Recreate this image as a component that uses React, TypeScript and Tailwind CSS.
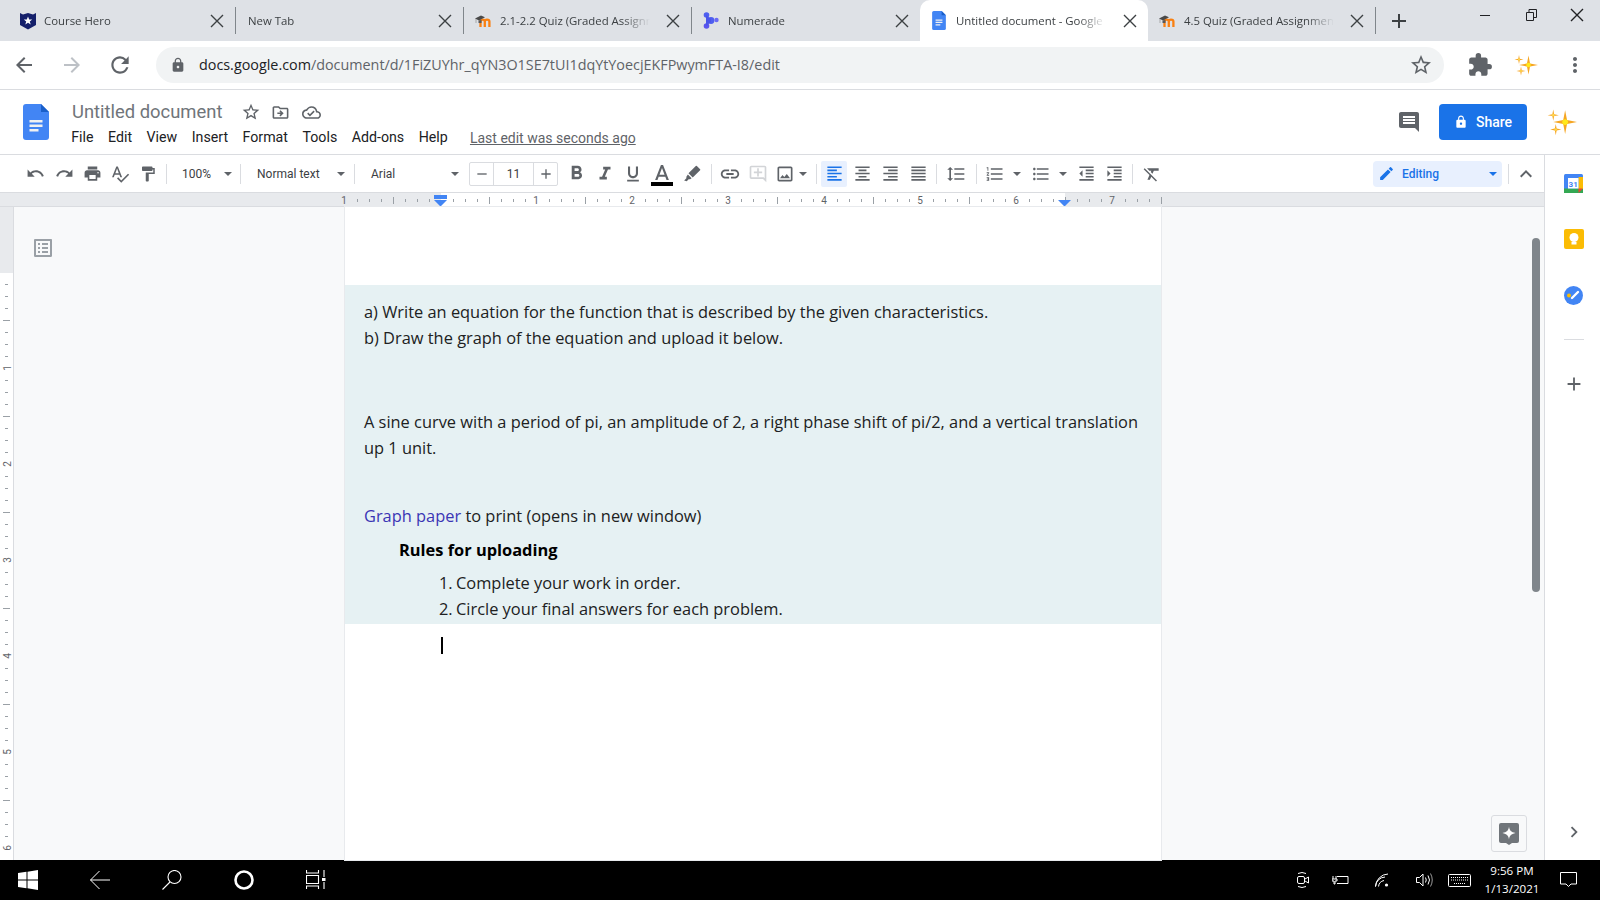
import type { ReactNode } from 'react';
import {
  MdArrowBack, MdArrowForward, MdRefresh, MdLock, MdStarBorder, MdExtension, MdMoreVert,
  MdOutlineDriveFileMove, MdOutlineCloudDone, MdUndo, MdRedo, MdPrint, MdSpellcheck, MdFormatPaint,
  MdFormatBold, MdFormatItalic, MdFormatUnderlined, MdLink, MdOutlineAddComment, MdOutlineImage,
  MdFormatAlignLeft, MdFormatAlignCenter, MdFormatAlignRight, MdFormatAlignJustify, MdFormatLineSpacing,
  MdFormatListNumbered, MdFormatListBulleted, MdFormatIndentDecrease, MdFormatIndentIncrease, MdFormatClear,
  MdEdit, MdExpandLess, MdAdd, MdRemove, MdChevronRight, MdOutlineListAlt, MdComment,
} from 'react-icons/md';

const Close = ({ className = 'text-[#3c4043]' }: { className?: string }) => (
  <svg width="14" height="14" viewBox="0 0 14 14" className={className}>
    <path d="M1 1l12 12M13 1L1 13" stroke="currentColor" strokeWidth="1.4" fill="none" />
  </svg>
);

const ShieldIcon = () => (
  <svg width="18" height="18" viewBox="0 0 18 18">
    <path d="M1 1l3 1.5L9 1l5 1.5L17 1v12l-8 4.5L1 13z" fill="#15206b" />
    <path d="M9 4.5l1.2 3h3l-2.4 2 .9 3.1L9 10.8l-2.7 1.8.9-3.1-2.4-2h3z" fill="#fff" />
  </svg>
);

const MoodleIcon = () => (
  <svg width="17" height="16" viewBox="0 0 17 16">
    <path d="M5.500 14V8.600C5.500 7 6.400 6.600 7.700 6.600S9.800 7 9.800 8.600V14M9.800 8.600c0-1.600 1-2 2.200-2s2.400.4 2.400 2V14" stroke="#f98012" strokeWidth="2.300" fill="none" />
    <path d="M0 5.500L6 2.500l4 1.800L4 7.500z" fill="#4a4a4a" />
    <path d="M1 6v4" stroke="#9a9a9a" strokeWidth="0.8" />
    <path d="M3.500 7.500v2.500h3V7z" fill="#58595b" />
  </svg>
);

const NumeradeIcon = () => (
  <svg width="16" height="17" viewBox="0 0 16 17" fill="#4f5ff0">
    <circle cx="3.500" cy="3" r="2.800" />
    <circle cx="3.500" cy="14" r="2.800" fill="#5a55ee" />
    <circle cx="8" cy="8.500" r="3.400" />
    <circle cx="13.500" cy="8" r="2.200" fill="#6a6af5" />
    <path d="M3 3l5 4v3l-5 4z" fill="#4a55e8" />
  </svg>
);

const DocsIcon = ({ w, h }: { w: number; h: number }) => (
  <svg width={w} height={h} viewBox="0 0 26 36">
    <path d="M3 0h15l8 8v25a3 3 0 0 1-3 3H3a3 3 0 0 1-3-3V3a3 3 0 0 1 3-3z" fill="#4285f4" />
    <path d="M18 0l8 8h-8z" fill="#1a5fc9" />
    <path d="M6.500 16h13v2.400h-13zM6.500 20.500h13v2.400h-13zM6.500 25h9v2.400h-9z" fill="#f1f1f1" />
  </svg>
);

const star = (cx: number, cy: number, r: number) =>
  `M${cx} ${cy - r}L${cx + r * 0.16} ${cy - r * 0.16}L${cx + r} ${cy}L${cx + r * 0.16} ${cy + r * 0.16}L${cx} ${cy + r}L${cx - r * 0.16} ${cy + r * 0.16}L${cx - r} ${cy}L${cx - r * 0.16} ${cy - r * 0.16}z`;

const Sparkles = ({ size }: { size: number }) => (
  <svg width={size} height={size} viewBox="0 0 24 24">
    <path d={star(14.5, 12, 9.500)} fill="#f6a623" />
    <circle cx="14.500" cy="12" r="2.300" fill="#ffe81a" />
    <path d={star(5, 6.500, 4.500)} fill="#f6a623" />
    <circle cx="5" cy="6.500" r="1.100" fill="#ffd54a" />
    <path d={star(7, 18, 4.500)} fill="#f6a623" />
    <circle cx="7" cy="18" r="1.100" fill="#ffd54a" />
  </svg>
);

const tabs = [
  { title: 'Course Hero', icon: <ShieldIcon /> },
  { title: 'New Tab' },
  { title: '2.1-2.2 Quiz (Graded Assignment)', icon: <MoodleIcon /> },
  { title: 'Numerade', icon: <NumeradeIcon /> },
  { title: 'Untitled document - Google Docs', icon: <DocsIcon w={16} h={19} />, active: true },
  { title: '4.5 Quiz (Graded Assignment)', icon: <MoodleIcon /> },
];

const TabStrip = () => (
  <div className="flex h-[41px] items-stretch bg-[#dee1e6] pl-[8px] font-['Open_Sans',sans-serif] text-[11.4px] text-[#3c4043]">
    {tabs.map((tab, i) => {
      const nextActive = tabs[i + 1]?.active;
      return (
        <div
          key={i}
          className={`flex w-[228px] items-center ${tab.active ? 'rounded-t-[10px] bg-white' : ''} ${
            tab.active || nextActive ? '' : 'border-r border-[#80868b] [border-image:linear-gradient(transparent_8px,#80868b_8px,#80868b_33px,transparent_33px)_1]'
          }`}
        >
          <div className={`flex w-[36px] shrink-0 justify-start ${tab.icon ? 'pl-[11px]' : ''}`}>{tab.icon}</div>
          <span
            className={`w-[150px] shrink-0 overflow-hidden whitespace-nowrap [mask-image:linear-gradient(to_right,black_122px,transparent_150px)] ${
              tab.icon ? '' : '-ml-[24px]'
            }`}
          >
            {tab.title}
          </span>
          <span className={`flex flex-1 justify-end pr-[11px] ${tab.icon ? '' : 'pl-[24px]'}`}>
            <Close />
          </span>
        </div>
      );
    })}
    <div className="ml-px flex w-[44px] items-center justify-center text-[#3c4043]">
      <MdAdd size={24} />
    </div>
    <div className="ml-auto flex items-start text-[#202124]">
      <div className="flex h-[30px] w-[46px] items-center justify-center">
        <span className="h-px w-[10px] bg-[#202124]" />
      </div>
      <div className="flex h-[30px] w-[46px] items-center justify-center">
        <svg width="11" height="12" viewBox="0 0 11 12" fill="none" stroke="#202124">
          <path d="M.5 3.500h7v8h-7zM3 3.500v-3h7.500v8H7.500" />
        </svg>
      </div>
      <div className="flex h-[30px] w-[46px] items-center justify-center">
        <Close className="text-[#202124]" />
      </div>
    </div>
  </div>
);

const AddressBar = () => (
  <div className="flex h-[49px] items-center border-b border-[#dadce0] bg-white">
    <div className="flex w-[48px] justify-center text-[#5f6368]"><MdArrowBack size={24} /></div>
    <div className="flex w-[48px] justify-center text-[#bdc1c6]"><MdArrowForward size={24} /></div>
    <div className="flex w-[48px] justify-center text-[#5f6368]"><MdRefresh size={26} /></div>
    <div className="ml-[12px] flex h-[36px] w-[1288px] items-center rounded-full bg-[#f1f3f4] pl-[14px] pr-[11px]">
      <MdLock size={16} className="text-[#5f6368]" />
      <span className="ml-[13px] whitespace-nowrap font-['Open_Sans',sans-serif] text-[14.35px] text-[#5f6368]">
        <span className="text-[#202124]">docs.google.com</span>/document/d/1FiZUYhr_qYN3O1SE7tUI1dqYtYoecjEKFPwymFTA-I8/edit
      </span>
      <MdStarBorder size={24} className="ml-auto text-[#5f6368]" />
    </div>
    <div className="ml-[22px] flex w-[28px] justify-center text-[#5f6368]"><MdExtension size={26} /></div>
    <div className="ml-[18px] flex w-[28px] justify-center"><Sparkles size={24} /></div>
    <div className="ml-[21px] flex w-[28px] justify-center text-[#5f6368]"><MdMoreVert size={24} /></div>
  </div>
);

const menus = ['File', 'Edit', 'View', 'Insert', 'Format', 'Tools', 'Add-ons', 'Help'];

const DocHeader = () => (
  <div className="flex h-[64px] items-start bg-white">
    <div className="ml-[23px] mt-[14px]"><DocsIcon w={26} h={36} /></div>
    <div className="ml-[23px] mt-[9px]">
      <div className="flex h-[26px] items-center">
        <span className="text-[18.4px] text-[#70757a]">Untitled document</span>
        <MdStarBorder size={20} className="ml-[19px] text-[#5f6368]" />
        <MdOutlineDriveFileMove size={19} className="ml-[10px] text-[#5f6368]" />
        <MdOutlineCloudDone size={19} className="ml-[12px] text-[#5f6368]" />
      </div>
      <div className="-ml-[8px] flex h-[26px] items-center text-[14.2px] text-[#202124]">
        {menus.map((m) => (
          <span key={m} className="px-[7.25px]">{m}</span>
        ))}
        <span className="ml-[15px] text-[14px] text-[#5f6368] underline">Last edit was seconds ago</span>
      </div>
    </div>
    <div className="ml-auto mt-[14px] flex items-center">
      <MdComment size={24} className="text-[#5f6368]" />
      <div className="ml-[18px] flex h-[36px] w-[88px] items-center justify-center gap-[8px] rounded-[4px] bg-[#1a73e8] text-[14px] font-medium text-white">
        <MdLock size={14} />
        Share
      </div>
      <div className="ml-[20px] mr-[23px]"><Sparkles size={30} /></div>
    </div>
  </div>
);

const Btn = ({ children, className = '' }: { children: ReactNode; className?: string }) => (
  <div className={`flex h-[26px] w-[28px] shrink-0 items-center justify-center text-[#5f6368] ${className}`}>{children}</div>
);

const Caret = ({ className = '' }: { className?: string }) => (
  <svg width="8" height="4" viewBox="0 0 8 4" className={`shrink-0 text-[#5f6368] ${className}`}>
    <path d="M0 0h8L4 4z" fill="currentColor" />
  </svg>
);

const Sep = ({ className = '' }: { className?: string }) => <div className={`h-[20px] w-px shrink-0 bg-[#dadce0] ${className}`} />;

const Toolbar = () => (
  <div className="flex h-[39px] items-center border-b border-[#dadce0] bg-white pl-[22px] text-[12px] text-[#3c4043]">
    <Btn className="-ml-[1px] mr-[1px]"><MdUndo size={19} /></Btn>
    <Btn><MdRedo size={19} /></Btn>
    <Btn><MdPrint size={19} /></Btn>
    <Btn><MdSpellcheck size={20} /></Btn>
    <Btn><MdFormatPaint size={18} /></Btn>
    <Sep className="ml-[4px]" />
    <div className="flex w-[73px] shrink-0 items-center justify-between pl-[15px] pr-[8px]">
      <span>100%</span>
      <Caret />
    </div>
    <Sep />
    <div className="flex w-[113px] shrink-0 items-center justify-between pl-[16px] pr-[9px]">
      <span>Normal text</span>
      <Caret />
    </div>
    <Sep />
    <div className="flex w-[114px] shrink-0 items-center justify-between pl-[16px] pr-[10px]">
      <span>Arial</span>
      <Caret />
    </div>
    <div className="flex h-[24px] w-[89px] shrink-0 items-center rounded-[2px] border border-[#dadce0]">
      <div className="flex h-full w-[24px] items-center justify-center border-r border-[#dadce0] text-[#5f6368]"><MdRemove size={16} /></div>
      <div className="flex h-full w-[40px] items-center justify-center border-r border-[#dadce0]">11</div>
      <div className="flex h-full flex-1 items-center justify-center text-[#5f6368]"><MdAdd size={16} /></div>
    </div>
    <Btn className="ml-[4px] mr-[1px]"><MdFormatBold size={23} /></Btn>
    <Btn><MdFormatItalic size={22} /></Btn>
    <Btn><MdFormatUnderlined size={20} /></Btn>
    <div className="ml-[1px] flex h-[26px] w-[28px] shrink-0 flex-col items-center justify-end pb-px">
      <svg width="18" height="17" viewBox="4 2 16 16" className="text-[#5f6368]">
        <path d="M11 3 5.500 17h2.250l1.120-3h6.250l1.120 3h2.250L13 3h-2zm-1.380 9L12 5.670 14.380 12H9.620z" fill="currentColor" />
      </svg>
      <div className="mt-[1px] h-[4px] w-[22px] bg-black" />
    </div>
    <Btn className="ml-[2px]">
      <svg width="18" height="18" viewBox="0 0 24 24" fill="currentColor">
        <path d="M18.500 1.200l4.300 4.300a1 1 0 0 1 0 1.400L13 16.700l-5.700-5.700 9.800-9.800a1 1 0 0 1 1.400 0zM6.500 12.500l5 5-2 1.500-2 0-2.500 2.500-3.500-1 3-3v-2z" />
      </svg>
    </Btn>
    <Sep className="ml-[5px]" />
    <Btn className="ml-[4px]"><MdLink size={22} /></Btn>
    <Btn className="!text-[#d2d4d7]"><MdOutlineAddComment size={20} /></Btn>
    <div className="-ml-[1px] mr-[1px] flex h-[26px] w-[27px] shrink-0 items-center justify-center text-[#5f6368]"><MdOutlineImage size={20} /></div>
    <Caret />
    <Sep className="ml-[9px]" />
    <div className="ml-[4px] flex h-[26px] w-[26px] shrink-0 items-center justify-center rounded-[2px] bg-[#e8f0fe] text-[#1a73e8]"><MdFormatAlignLeft size={19} /></div>
    <Btn className="ml-[1px]"><MdFormatAlignCenter size={19} /></Btn>
    <Btn><MdFormatAlignRight size={19} /></Btn>
    <Btn><MdFormatAlignJustify size={19} /></Btn>
    <Sep className="ml-[4px]" />
    <Btn className="ml-[5px]"><MdFormatLineSpacing size={20} /></Btn>
    <Sep className="ml-[6px]" />
    <Btn className="ml-[4px]"><MdFormatListNumbered size={20} /></Btn>
    <Caret className="ml-[4px]" />
    <Btn className="ml-[6px]"><MdFormatListBulleted size={20} /></Btn>
    <Caret className="ml-[4px]" />
    <Btn className="ml-[5px]"><MdFormatIndentDecrease size={19} /></Btn>
    <Btn><MdFormatIndentIncrease size={19} /></Btn>
    <Sep className="ml-[4px]" />
    <Btn className="ml-[5px]"><MdFormatClear size={20} /></Btn>
    <div className="ml-auto flex h-[26px] w-[129px] shrink-0 items-center rounded-[4px] bg-[#e8f0fe] pl-[5px] pr-[5px] text-[#1a73e8]">
      <MdEdit size={17} />
      <span className="ml-[7px] font-medium">Editing</span>
      <Caret className="ml-auto !text-[#1a73e8]" />
    </div>
    <Sep className="ml-[6px]" />
    <Btn className="ml-[3px] mr-[4px]"><MdExpandLess size={24} /></Btn>
  </div>
);

const HorizontalRuler = () => {
  const ticks = [];
  for (let x = 345, n = 0; x <= 1161; x += 12, n++) {
    if (n % 8 === 0 && x !== 1161) continue;
    const long = n % 4 === 0;
    ticks.push(<path key={x} d={`M${x + 0.5} ${long ? 4 : 6}v${long ? 7 : 3}`} stroke="#9aa0a6" />);
  }
  const nums = [[344, 1], [536, 1], [632, 2], [728, 3], [824, 4], [920, 5], [1016, 6], [1112, 7]];
  return (
    <svg width="1544" height="14" className="block shrink-0">
      <rect width="1544" height="14" fill="#e8eaed" />
      <rect x="441" width="624" height="14" fill="#fff" />
      <path d="M0 13.500h1544" stroke="#dadce0" />
      {ticks}
      {nums.map(([x, n], i) => (
        <text key={i} x={x} y="11" textAnchor="middle" fontSize="10" fill="#5f6368" fontFamily="Roboto, sans-serif">{n}</text>
      ))}
      <path d="M434 2h13v4h-13z" fill="#4285f4" />
      <path d="M434 7h13l-6.500 6.500zM1058 7h13l-6.500 6.500z" fill="#4285f4" />
    </svg>
  );
};

const VerticalRuler = () => {
  const ticks = [];
  for (let y = 285, n = 1; y < 860; y += 12, n++) {
    if (n % 8 === 0) continue;
    const long = n % 4 === 0;
    ticks.push(<path key={y} d={`M${long ? 3 : 5} ${y - 0.5}h${long ? 7 : 3}`} stroke="#9aa0a6" />);
  }
  return (
    <svg width="14" height="653" viewBox="0 207 14 653" className="block shrink-0">
      <rect x="0" y="207" width="14" height="653" fill="#fff" />
      <rect x="0" y="207" width="13" height="66" fill="#e8eaed" />
      <path d="M13.500 207v653" stroke="#dadce0" />
      {ticks}
      {[368, 464, 560, 656, 752, 848].map((y, i) => (
        <text key={y} transform={`translate(10.500 ${y}) rotate(-90)`} textAnchor="middle" fontSize="10" fill="#5f6368" fontFamily="Roboto, sans-serif">{i + 1}</text>
      ))}
    </svg>
  );
};

const DocPage = () => (
  <div className="w-[816px] shrink-0 bg-white pt-[78px] font-['Open_Sans',sans-serif] text-[16.4px] leading-[26px] text-[#202122] shadow-[0_0_0_1px_#e8eaed]">
    <div className="bg-[#e6f1f3] pb-[2px] pl-[19px] pr-[12px] pt-[14px]">
      <div>a) Write an equation for the function that is described by the given characteristics.</div>
      <div>b) Draw the graph of the equation and upload it below.</div>
      <div className="mt-[58px]">A sine curve with a period of pi, an amplitude of 2, a right phase shift of pi/2, and a vertical translation up 1 unit.</div>
      <div className="mt-[42px]"><span className="text-[#3b35b5]">Graph paper</span> to print (opens in new window)</div>
      <div className="ml-[35px] mt-[8px] font-bold text-black">Rules for uploading</div>
      <div className="ml-[75px] mt-[7px] flex"><span className="w-[17px]">1.</span>Complete your work in order.</div>
      <div className="ml-[75px] flex"><span className="w-[17px]">2.</span>Circle your final answers for each problem.</div>
    </div>
    <div className="ml-[96px] mt-[13px] h-[17px] w-[2px] bg-black" />
  </div>
);

const RightRail = () => (
  <div className="flex w-[56px] shrink-0 flex-col items-center border-l border-[#dadce0] bg-white pr-[1px] pt-[19px]">
    <svg width="19" height="19" viewBox="0 0 19 19" className="ml-[3px]">
      <rect width="19" height="19" rx="1.500" fill="#4285f4" />
      <rect y="14.500" width="19" height="4.500" fill="#34a853" />
      <rect x="14.500" y="3" width="4.500" height="12" fill="#fbbc04" />
      <path d="M14.500 14.500H19L14.500 19z" fill="#ea4335" />
      <rect x="4" y="4" width="10.500" height="10.500" fill="#fff" />
      <text x="9.200" y="12.500" textAnchor="middle" fontSize="8" fontWeight="700" fill="#4285f4" fontFamily="Roboto, sans-serif">31</text>
    </svg>
    <svg width="20" height="20" viewBox="0 0 20 20" className="ml-[3px] mt-[36px]">
      <rect width="20" height="20" rx="2" fill="#fbbc04" />
      <circle cx="10" cy="8.500" r="4.500" fill="#fff" />
      <rect x="7.500" y="13" width="5" height="2.500" fill="#fff" />
    </svg>
    <svg width="19" height="19" viewBox="0 0 19 19" className="ml-[3px] mt-[37px]">
      <circle cx="9.500" cy="9.500" r="9.500" fill="#4285f4" />
      <path d="M8 12l6-6" stroke="#fff" strokeWidth="2.400" strokeLinecap="round" />
      <circle cx="5" cy="9.500" r="2" fill="#fbbc04" />
    </svg>
    <div className="ml-[3px] mt-[34px] h-px w-[20px] bg-[#dadce0]" />
    <MdAdd size={22} className="ml-[3px] mt-[33px] text-[#5f6368]" />
    <MdChevronRight size={22} className="ml-[3px] mt-auto mb-[17px] text-[#5f6368]" />
  </div>
);

const WinBack = () => (
  <svg width="20" height="20" viewBox="0 0 20 20" fill="none" stroke="#fff">
    <path d="M0.500 10H20M9.500 1L0.500 10l9 9" />
  </svg>
);

const Taskbar = () => (
  <div className="flex h-[40px] items-center bg-black pl-[18px] text-white">
    <svg width="20" height="20" viewBox="0 0 20 20" fill="#fff">
      <path d="M0 3l8.500-1.200v7.700H0zM9.500 1.700L20 0v9.500H9.500zM0 10.500h8.500v7.700L0 17zM9.500 10.500H20V20L9.500 18.300z" />
    </svg>
    <div className="ml-[52px]"><WinBack /></div>
    <svg width="20" height="20" viewBox="0 0 20 20" fill="none" stroke="#fff" strokeWidth="1.100" className="ml-[52px]">
      <circle cx="12.500" cy="7" r="6.500" />
      <path d="M8 12l-7.500 7.500" />
    </svg>
    <svg width="20" height="20" viewBox="0 0 20 20" fill="none" stroke="#fff" strokeWidth="2.600" className="ml-[52px]">
      <circle cx="10" cy="10" r="8.500" />
    </svg>
    <svg width="20" height="20" viewBox="0 0 20 20" fill="none" stroke="#fff" strokeWidth="1.100" className="ml-[52px]">
      <path d="M0.500 0v3h12V0M0.500 5.500h12v8h-12zM0.500 19v-3h12v3M18 0v7M18 12v7" />
      <rect x="16" y="8" width="3.500" height="3" fill="#fff" stroke="none" />
    </svg>
    <div className="ml-auto flex items-center">
      <svg width="14" height="18" viewBox="0 0 14 18" fill="none" stroke="#fff" className="mr-[22px]">
        <rect x="1.500" y="5.500" width="7" height="7" rx="1.500" />
        <path d="M9 8l3.500-2v6L9 10M2 2.500q4-2 8 0M2 15.500q4 2 8 0" />
      </svg>
      <svg width="17" height="12" viewBox="0 0 17 12" fill="none" stroke="#fff" className="mr-[26px]">
        <path d="M5 2.500h11v7H5M1 2v3M4 2v3M0 5h5v2H3v3H2V7H0z" />
      </svg>
      <svg width="14" height="14" viewBox="0 0 14 14" fill="none" stroke="#fff" className="mr-[27px]">
        <path d="M.5 13.500A13 13 0 0 1 13 1M.5 13.500A10 10 0 0 1 10 4M3.500 13.500A7 7 0 0 1 9 7.500" />
        <circle cx="11.500" cy="12" r="1.600" fill="#fff" stroke="none" />
      </svg>
      <svg width="17" height="14" viewBox="0 0 17 14" fill="none" stroke="#fff" className="mr-[15px]">
        <path d="M.5 4.500h3L7 1v12L3.500 9.500h-3zM9.500 4.500q1.500 2.500 0 5M12 2.500q3 4.500 0 9" />
        <path d="M14.500 .5q3.500 6.500 0 13" strokeOpacity="0.6" />
      </svg>
      <svg width="23" height="13" viewBox="0 0 23 13" fill="none" stroke="#fff" className="mr-[14px]">
        <rect x=".5" y=".5" width="22" height="12" rx="1" />
        <path d="M3 3.500h17M3 6h17M6 9.500h11" strokeDasharray="1 1" />
      </svg>
      <div className="flex w-[54px] flex-col items-center font-['Open_Sans',sans-serif] text-[11.6px] leading-[18px]">
        <span>9:56 PM</span>
        <span>1/13/2021</span>
      </div>
      <svg width="17" height="16" viewBox="0 0 17 16" fill="none" stroke="#fff" className="ml-[21px] mr-[23px]">
        <path d="M.5.500h16v11.500h-5.500l-2.500 2.500-2.500-2.500H.5z" />
      </svg>
    </div>
  </div>
);

export default function App() {
  return (
    <div className="flex h-[900px] w-[1600px] flex-col overflow-hidden bg-white font-[Roboto,sans-serif]">
      <TabStrip />
      <AddressBar />
      <DocHeader />
      <div className="flex h-[706px] border-t border-[#dadce0]">
        <div className="flex w-[1544px] shrink-0 flex-col">
          <Toolbar />
          <HorizontalRuler />
          <div className="relative flex h-[653px] bg-[#f8f9fa]">
            <VerticalRuler />
            <div className="w-[331px] shrink-0 pl-[17px] pt-[29px]">
              <MdOutlineListAlt size={24} className="text-[#9aa0a6]" />
            </div>
            <DocPage />
            <div className="absolute right-[4px] top-[31px] h-[354px] w-[8px] rounded-full bg-[#80868b]" />
            <div className="absolute bottom-[8px] right-[17px] flex h-[37px] w-[36px] items-center justify-center rounded-[3px] border border-[#dadce0] bg-[#f8f9fa]">
              <svg width="20" height="22" viewBox="0 0 20 22">
                <path d="M2 0h16a2 2 0 0 1 2 2v16a2 2 0 0 1-2 2h-5l-3 2-3-2H2a2 2 0 0 1-2-2V2a2 2 0 0 1 2-2z" fill="#70757a" />
                <path d="M10 3.500c.5 4 2 5.500 6.500 6.500-4.500 1-6 2.500-6.500 6.500-.5-4-2-5.500-6.500-6.500 4.500-1 6-2.500 6.500-6.500z" fill="#fff" />
              </svg>
            </div>
          </div>
        </div>
        <RightRail />
      </div>
      <Taskbar />
    </div>
  );
}
